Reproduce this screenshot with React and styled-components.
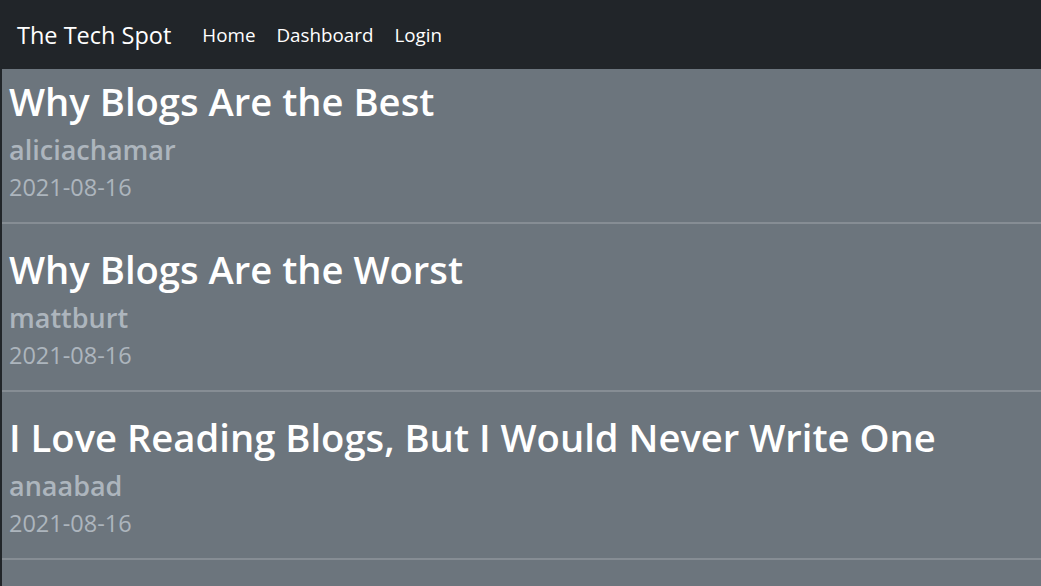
import React from "react";
import styled, { createGlobalStyle } from "styled-components";

const Global = createGlobalStyle`
  html, body {
    margin: 0;
    padding: 0;
    background: #212529;
    font-family: "Open Sans", "Noto Sans", sans-serif;
  }
`;

const Navbar = styled.nav`
  height: 69px;
  background: #212529;
  display: flex;
  align-items: center;
  padding: 0 17px;
  box-sizing: border-box;
`;

const Brand = styled.a`
  color: #fff;
  font-size: 23.5px;
  margin-right: 31px;
  text-decoration: none;
`;

const NavLink = styled.a`
  color: #fff;
  font-size: 18.8px;
  margin-right: 21px;
  text-decoration: none;
`;

const Main = styled.main`
  margin-left: 2px;
  background: #6c757d;
  min-height: calc(100vh - 69px);
`;

const Post = styled.article`
  padding: 22px 7px 24px;
  border-bottom: 2px solid #868d94;
  display: flex;
  flex-direction: column;

  &:first-child {
    padding-top: 9px;
  }
`;

const Title = styled.h2`
  margin: 0;
  color: #fff;
  font-size: 38.2px;
  font-weight: 600;
  line-height: 46px;
`;

const Author = styled.div`
  color: #adb5bd;
  font-size: 27px;
  font-weight: 600;
  line-height: 52px;
`;

const DateLine = styled.div`
  color: #adb5bd;
  font-size: 23.5px;
  line-height: 22px;
`;

const posts = [
  { title: "Why Blogs Are the Best", author: "aliciachamar", date: "2021-08-16" },
  { title: "Why Blogs Are the Worst", author: "mattburt", date: "2021-08-16" },
  { title: "I Love Reading Blogs, But I Would Never Write One", author: "anaabad", date: "2021-08-16" },
];

export default function App() {
  return (
    <>
      <Global />
      <Navbar>
        <Brand href="#">The Tech Spot</Brand>
        <NavLink href="#">Home</NavLink>
        <NavLink href="#">Dashboard</NavLink>
        <NavLink href="#">Login</NavLink>
      </Navbar>
      <Main>
        {posts.map((p) => (
          <Post key={p.title}>
            <Title>{p.title}</Title>
            <Author>{p.author}</Author>
            <DateLine>{p.date}</DateLine>
          </Post>
        ))}
      </Main>
    </>
  );
}
